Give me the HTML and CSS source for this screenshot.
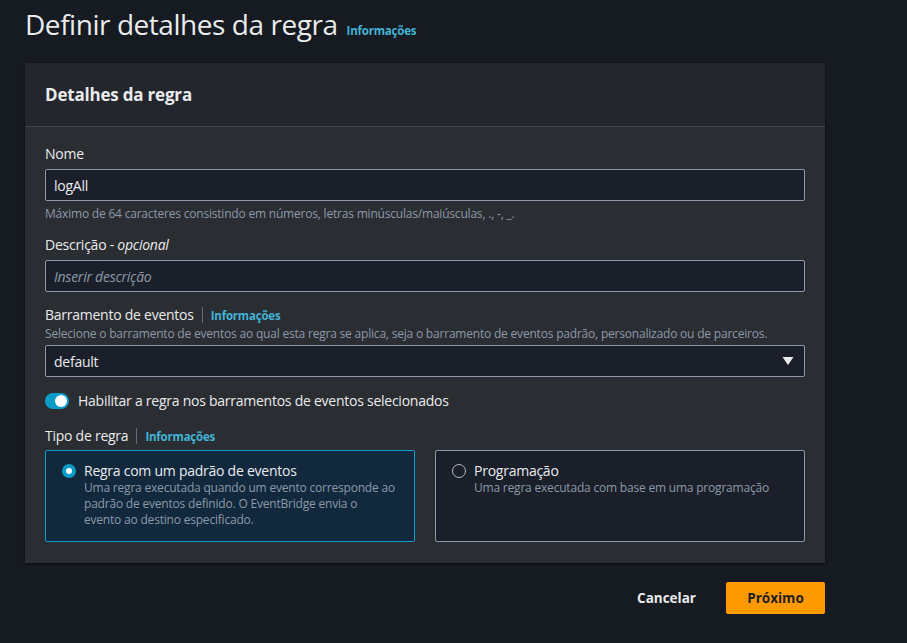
FILE: index.html
```html
<!DOCTYPE html>
<html lang="pt">
<head>
<meta charset="utf-8">
<link rel="stylesheet" href="styles.css">
</head>
<body>
<div class="page">
  <div class="title-row">
    <h1 class="title">Definir detalhes da regra</h1>
    <a class="info">Informações</a>
  </div>
  <section class="card">
    <header class="card-head"><h2>Detalhes da regra</h2></header>
    <div class="card-body">
      <div class="field">
        <label class="label">Nome</label>
        <div class="input">logAll</div>
        <div class="hint">Máximo de 64 caracteres consistindo em números, letras minúsculas/maiúsculas, ., -, _.</div>
      </div>
      <div class="field">
        <label class="label">Descrição - <i>opcional</i></label>
        <div class="input placeholder">Inserir descrição</div>
      </div>
      <div class="field">
        <div class="label-row"><label class="label">Barramento de eventos</label><span class="sep"></span><a class="info">Informações</a></div>
        <div class="desc">Selecione o barramento de eventos ao qual esta regra se aplica, seja o barramento de eventos padrão, personalizado ou de parceiros.</div>
        <div class="input select"><span>default</span><svg class="caret" width="12" height="10" viewBox="0 0 12 10"><path d="M0.5 1h11L6 9z" fill="#e9ebed"/></svg></div>
      </div>
      <div class="toggle-row">
        <span class="toggle"><span class="knob"></span></span>
        <span class="toggle-label">Habilitar a regra nos barramentos de eventos selecionados</span>
      </div>
      <div class="field last">
        <div class="label-row"><label class="label">Tipo de regra</label><span class="sep"></span><a class="info">Informações</a></div>
        <div class="tiles">
          <div class="tile selected">
            <span class="radio on"></span>
            <div>
              <div class="tile-title">Regra com um padrão de eventos</div>
              <div class="tile-desc">Uma regra executada quando um evento corresponde ao padrão de eventos definido. O EventBridge envia o<br>evento ao destino especificado.</div>
            </div>
          </div>
          <div class="tile">
            <span class="radio"></span>
            <div>
              <div class="tile-title">Programação</div>
              <div class="tile-desc">Uma regra executada com base em uma programação</div>
            </div>
          </div>
        </div>
      </div>
    </div>
  </section>
  <div class="actions">
    <button class="btn-link">Cancelar</button>
    <button class="btn-primary">Próximo</button>
  </div>
</div>
</body>
</html>
```

FILE: styles.css
```css
html, body {
  margin: 0;
  padding: 0;
  background: #161a21;
  font-family: "Open Sans", "Noto Sans", sans-serif;
  color: #d1d5db;
}
.page {
  width: 800px;
  padding: 0 0 0 25px;
}
.title-row {
  display: flex;
  align-items: baseline;
  gap: 9px;
  height: 63px;
  padding-top: 5px;
  box-sizing: border-box;
}
.title {
  margin: 0;
  font-size: 28px;
  font-weight: 400;
  color: #e9ebed;
  letter-spacing: -0.45px;
}
.info {
  font-size: 11.5px;
  font-weight: 700;
  color: #42b4d6;
  letter-spacing: -0.2px;
}
.card {
  background: #2a2d32;
  box-shadow: 0 1px 2px rgba(0,0,0,0.6);
}
.card-head {
  background: #23262c;
  height: 64px;
  border-bottom: 1px solid #414750;
  display: flex;
  align-items: center;
  padding: 0 20px;
  box-sizing: border-box;
}
.card-head h2 {
  margin: 0;
  font-size: 17px;
  font-weight: 700;
  color: #e9ebed;
  letter-spacing: -0.2px;
}
.card-body {
  padding: 17px 20px 21px;
}
.field { margin-bottom: 13px; }
.field.last { margin-bottom: 0; }
.label {
  display: block;
  font-size: 14px;
  color: #e9ebed;
  line-height: 20px;
  margin-bottom: 5px;
  letter-spacing: -0.25px;
}
.label i { font-style: italic; }
.label-row {
  display: flex;
  align-items: center;
  gap: 8px;
}
.label-row .label { margin-bottom: 0; }
.sep {
  width: 1px;
  height: 16px;
  background: #5f6b7a;
}
.desc {
  font-size: 12px;
  color: #8d99a8;
  line-height: 17px;
  margin-bottom: 3px;
  letter-spacing: -0.2px;
}
.input {
  height: 32px;
  box-sizing: border-box;
  border: 1px solid #8d99a8;
  border-radius: 2px;
  background: #1a1f29;
  padding: 0 8px;
  display: flex;
  align-items: center;
  font-size: 14px;
  color: #e9ebed;
  letter-spacing: -0.25px;
}
.input.placeholder {
  color: #8d99a8;
  font-style: italic;
}
.select { justify-content: space-between; padding-right: 10px; }
.hint {
  font-size: 12px;
  color: #8d99a8;
  margin-top: 5px;
  line-height: 16px;
  letter-spacing: -0.2px;
}
.toggle-row {
  display: flex;
  align-items: center;
  gap: 9px;
  margin: 14px 0 16px;
}
.toggle {
  width: 24px;
  height: 16px;
  border-radius: 8px;
  background: #0a9bc7;
  position: relative;
}
.knob {
  position: absolute;
  right: 2px;
  top: 2px;
  width: 12px;
  height: 12px;
  border-radius: 50%;
  background: #ffffff;
}
.toggle-label {
  font-size: 14px;
  color: #e9ebed;
  letter-spacing: -0.25px;
}
.tiles {
  display: grid;
  grid-template-columns: 1fr 1fr;
  gap: 20px;
  margin-top: 4px;
}
.tile {
  height: 92px;
  box-sizing: border-box;
  border: 1px solid #8d99a8;
  border-radius: 2px;
  background: #1a1f29;
  padding: 10px 16px;
  display: flex;
  gap: 8px;
}
.tile.selected {
  border-color: #08a1d0;
  background: #11283d;
}
.radio {
  flex: none;
  width: 14px;
  height: 14px;
  box-sizing: border-box;
  border-radius: 50%;
  border: 1.5px solid #b6bec9;
  margin-top: 3px;
}
.radio.on {
  border: 4px solid #0a9bc7;
  background: #ffffff;
}
.tile-title {
  font-size: 14px;
  color: #e9ebed;
  line-height: 19px;
  letter-spacing: -0.25px;
}
.tile-desc {
  font-size: 12px;
  color: #8d99a8;
  line-height: 16px;
  letter-spacing: -0.2px;
}
.actions {
  display: flex;
  justify-content: flex-end;
  align-items: center;
  gap: 10px;
  margin-top: 19px;
}
.btn-link, .btn-primary {
  font-family: inherit;
  font-size: 13.5px;
  font-weight: 700;
  border: none;
  height: 32px;
  border-radius: 2px;
  cursor: pointer;
}
.btn-link {
  background: transparent;
  color: #e9ebed;
  padding: 0 20px;
}
.btn-primary {
  background: #ff9900;
  color: #1d1f23;
  width: 99px;
}
```
